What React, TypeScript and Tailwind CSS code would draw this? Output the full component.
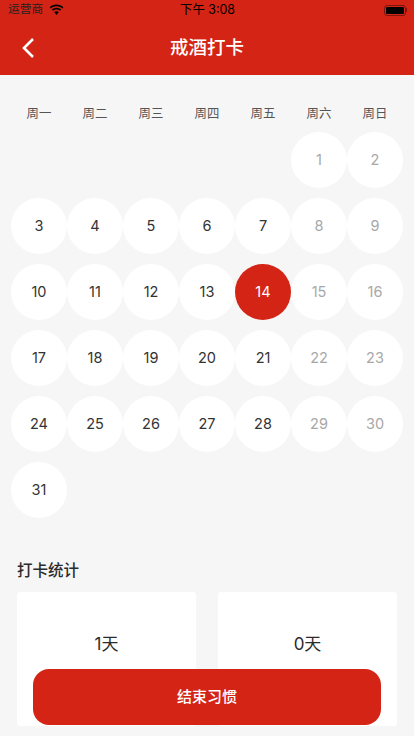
const font = { fontFamily: 'Inter, "Noto Sans CJK SC", sans-serif' };
const weeks = ['周一', '周二', '周三', '周四', '周五', '周六', '周日'];
const rows: (number | null)[][] = [
  [null, null, null, null, null, 1, 2],
  [3, 4, 5, 6, 7, 8, 9],
  [10, 11, 12, 13, 14, 15, 16],
  [17, 18, 19, 20, 21, 22, 23],
  [24, 25, 26, 27, 28, 29, 30],
  [31, null, null, null, null, null, null],
];

function Day({ n, weekend }: { n: number; weekend: boolean }) {
  const today = n === 14;
  return (
    <div
      className={`flex h-14 w-14 items-center justify-center rounded-full pb-[1px] text-[14.5px] ${
        today ? 'bg-[#d42415] text-white' : weekend ? 'bg-white text-[#a8a8a8]' : 'bg-white text-[#333333]'
      }`}
    >
      {n}
    </div>
  );
}

export default function App() {
  return (
    <div style={font} className="relative h-[736px] w-[414px] overflow-hidden bg-[#f6f6f6]">
      <div className="h-[75px] bg-[#d42415]">
        <div className="flex h-5 items-center justify-between pl-2 pr-[7px] text-black">
          <div className="flex items-center gap-[6px]">
            <span className="text-[11.7px] text-[#222]">运营商</span>
            <svg width="15" height="11" viewBox="1 0 14 11" fill="currentColor">
              <path d="M8 2.300c2.200 0 4.200.8 5.800 2.200l1.100-1.200C13 1.600 10.600.6 8 .6S3 1.600 1.100 3.300l1.100 1.200C3.800 3.100 5.800 2.300 8 2.300z" />
              <path d="M8 5.500c1.300 0 2.500.5 3.500 1.300l1.100-1.200C11.300 4.500 9.700 3.800 8 3.800s-3.300.7-4.600 1.800l1.100 1.200c1-.8 2.200-1.300 3.500-1.300z" />
              <path d="M8 7.200c-.9 0-1.700.3-2.300.9L8 11l2.300-2.900C9.700 7.500 8.900 7.200 8 7.200z" />
            </svg>
          </div>
          <span className="absolute left-[180px] text-[12.4px]">下午 3:08</span>
          <div className="flex items-center">
            <div className="flex h-[11px] w-[22px] items-center rounded-[3px] border border-[#00000066] p-[1px]">
              <div className="h-full w-full rounded-[1px] bg-black" />
            </div>
            <div className="h-[4px] w-[1px] bg-[#00000066]" />
          </div>
        </div>
        <div className="relative flex h-[55px] items-center justify-center">
          <svg className="absolute left-[21px] top-[17px]" width="14" height="22" viewBox="0 0 14 22" fill="none" stroke="white" strokeWidth="2.600">
            <path d="M12 2 3 11l9 9" />
          </svg>
          <span className="text-[18.5px] font-medium text-white">戒酒打卡</span>
        </div>
      </div>

      <div className="grid grid-cols-[repeat(7,56px)] px-[11px] pt-[29px]">
        {weeks.map((w) => (
          <div key={w} className="flex h-[19px] items-center justify-center pt-[2px] text-[12.4px] text-[#555555]">
            {w}
          </div>
        ))}
      </div>

      <div className="flex flex-col gap-[10px] px-[11px] pt-[9px]">
        {rows.map((r, i) => (
          <div key={i} className="grid grid-cols-[repeat(7,56px)]">
            {r.map((n, j) => (n === null ? <div key={j} className="h-14" /> : <Day key={j} n={n} weekend={j >= 5} />))}
          </div>
        ))}
      </div>

      <div className="px-[17px] pt-[43px]">
        <div className="text-[15.5px] leading-5 font-medium text-[#2b2b2b]">打卡统计</div>
        <div className="mt-[11px] flex justify-between">
          {['1天', '0天'].map((t) => (
            <div key={t} className="flex h-[134px] w-[179px] justify-center rounded-[3px] bg-white pt-[40px] text-[17px] leading-6 text-[#2b2b2b]">
              {t}
            </div>
          ))}
        </div>
      </div>

      <div className="absolute left-[33px] top-[669px] flex h-[56px] w-[348px] items-center justify-center rounded-[16px] bg-[#d42415] text-[15px] font-medium text-white">
        结束习惯
      </div>
    </div>
  );
}
